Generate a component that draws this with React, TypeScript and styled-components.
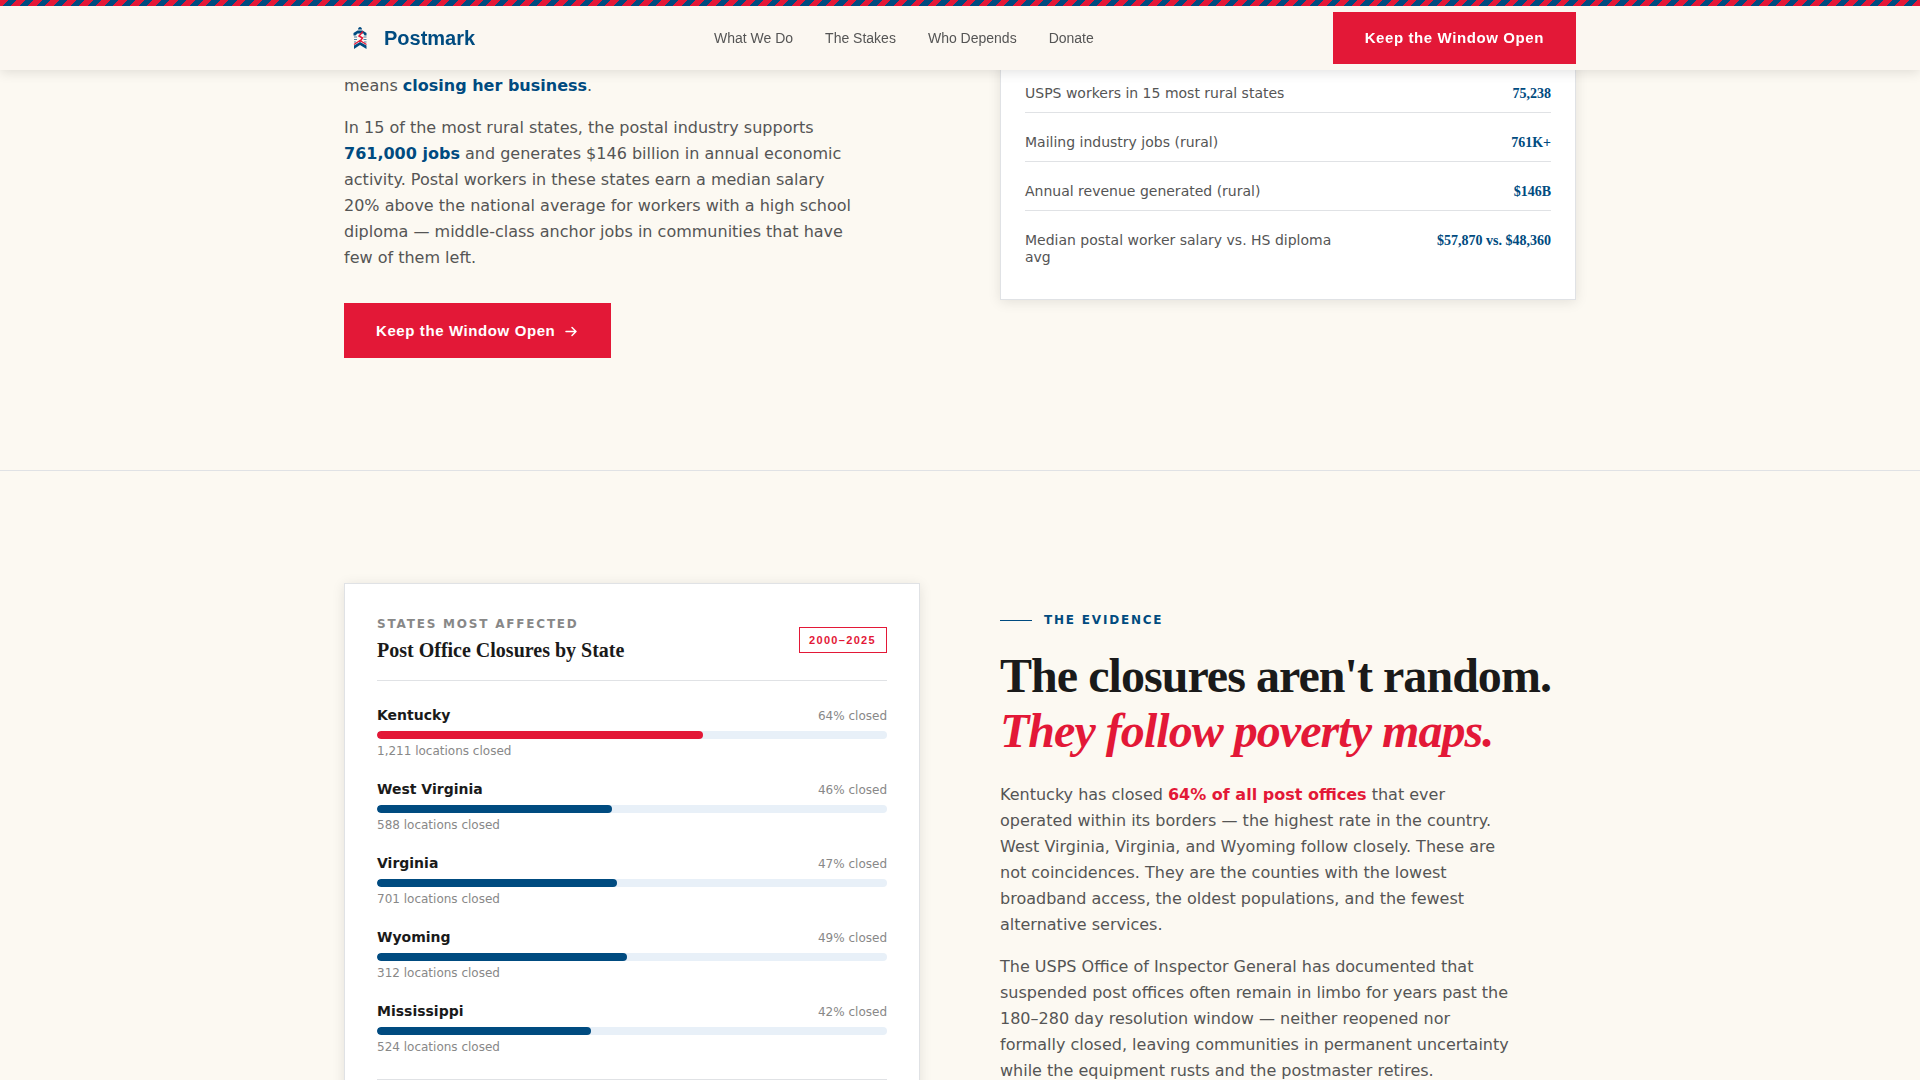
import React from "react";
import styled, { createGlobalStyle } from "styled-components";

const blue = "#004b80";
const red = "#e31837";
const ink = "#1a1a1a";
const body = "#555555";
const muted = "#888888";
const cream = "#fcf9f2";
const rule = "#e0e2e5";
const sans = `"DejaVu Sans", sans-serif`;
const ui = `"Liberation Sans", Arial, sans-serif`;
const serif = `"Liberation Serif", "Times New Roman", serif`;

const GlobalStyle = createGlobalStyle`
  *, *::before, *::after { box-sizing: border-box; }
  body { margin: 0; background: ${cream}; color: ${ink}; font-family: ${sans}; }
  h2, h3, p, dl, dd, ul { margin: 0; padding: 0; }
  a { text-decoration: none; }
`;

const Header = styled.header`
  position: fixed;
  top: 0;
  left: 0;
  right: 0;
  z-index: 10;
  background: #fbf7f1;
  box-shadow: 0 2px 12px rgba(0, 0, 0, 0.12);
`;

const AirmailStripe = styled.div`
  height: 6px;
  background: repeating-linear-gradient(
    -45deg,
    ${red} 0,
    ${red} 6px,
    ${blue} 6px,
    ${blue} 12px
  );
`;

const Container = styled.div`
  max-width: 1280px;
  margin: 0 auto;
  padding: 0 24px;
`;

const Bar = styled(Container)`
  display: flex;
  align-items: center;
  justify-content: space-between;
  height: 64px;
`;

const Brand = styled.a`
  display: flex;
  align-items: center;
  gap: 8px;
  color: ${blue};
  font: 700 20px/24px ${ui};
`;

const Nav = styled.nav`
  display: flex;
  gap: 32px;
`;

const NavLink = styled.a`
  color: ${body};
  font: 400 14px/20px ${ui};
`;

const Cta = styled.button<{ $large?: boolean }>`
  display: inline-flex;
  align-items: center;
  gap: 8px;
  height: ${(p) => (p.$large ? 55 : 52)}px;
  padding: 0 32px;
  border: 0;
  background: ${red};
  color: #ffffff;
  font: 700 15px/20px ${ui};
  letter-spacing: 0.04em;
  white-space: nowrap;
  cursor: pointer;
`;

const Jobs = styled.section`
  padding: 60px 0 112px;
  border-bottom: 1px solid ${rule};
`;

const Evidence = styled.section`
  padding: 112px 0;
`;

const Columns = styled(Container)`
  display: grid;
  grid-template-columns: 1fr 1fr;
  gap: 80px;
  align-items: start;
`;

const Story = styled.div`
  padding-top: 13px;
`;

const Argument = styled.div`
  padding-top: 25px;
`;

const Copy = styled.p`
  max-width: 520px;
  margin-bottom: 16px;
  color: ${body};
  font-size: 16px;
  line-height: 26px;
`;

const Strong = styled.strong<{ $tone: string }>`
  color: ${(p) => p.$tone};
`;

const Action = styled.div`
  display: flex;
  margin-top: 32px;
`;

const Card = styled.div`
  background: #ffffff;
  border: 1px solid ${rule};
  box-shadow: 0 2px 12px rgba(0, 0, 0, 0.1);
`;

const FactCard = styled(Card)`
  padding: 24px 24px 33px;
`;

const Facts = styled.dl`
  display: grid;
  gap: 21px;
`;

const Fact = styled.div`
  display: flex;
  justify-content: space-between;
  gap: 24px;
  padding-bottom: 10px;
  border-bottom: 1px solid ${rule};
  font-size: 14px;
  line-height: 17px;

  &:last-child {
    padding-bottom: 0;
    border-bottom: 0;
  }
`;

const FactLabel = styled.dt`
  max-width: 320px;
  color: ${body};
`;

const FactValue = styled.dd`
  color: ${blue};
  font-family: ${serif};
  font-weight: 700;
  white-space: nowrap;
`;

const StateCard = styled(Card)`
  padding: 32px;
`;

const CardHead = styled.div`
  display: flex;
  align-items: center;
  justify-content: space-between;
  padding-bottom: 16px;
  border-bottom: 1px solid ${rule};
`;

const Kicker = styled.p`
  color: ${muted};
  font-size: 12px;
  font-weight: 700;
  line-height: 16px;
  letter-spacing: 0.15em;
  text-transform: uppercase;
`;

const CardTitle = styled.h3`
  margin-top: 4px;
  font: 700 20px/28px ${serif};
`;

const Badge = styled.span`
  padding: 4px 10px 4px 9px;
  border: 1px solid ${red};
  color: ${red};
  font: 700 11px/16px ${ui};
  letter-spacing: 0.12em;
`;

const StateList = styled.ul`
  display: grid;
  gap: 20px;
  padding: 24px 0;
  border-bottom: 1px solid ${rule};
  list-style: none;
`;

const StateRow = styled.div`
  display: flex;
  align-items: baseline;
  justify-content: space-between;
  margin-bottom: 6px;
`;

const StateName = styled.span`
  font-size: 14px;
  font-weight: 700;
  line-height: 20px;
`;

const Small = styled.span`
  display: block;
  color: ${muted};
  font-size: 12px;
  line-height: 16px;
`;

const Track = styled.div`
  height: 8px;
  margin-bottom: 4px;
  border-radius: 4px;
  background: #e8f0f8;
  overflow: hidden;
`;

const Fill = styled.div<{ $tone: string }>`
  height: 100%;
  border-radius: 4px;
  background: ${(p) => p.$tone};
`;

const Eyebrow = styled.p`
  display: flex;
  align-items: center;
  gap: 12px;
  margin-bottom: 16px;
  color: ${blue};
  font-size: 12px;
  font-weight: 700;
  line-height: 24px;
  letter-spacing: 0.15em;
  text-transform: uppercase;

  &::before {
    content: "";
    width: 32px;
    height: 1px;
    background: ${blue};
  }
`;

const Headline = styled.h2`
  margin-bottom: 24px;
  font: 700 48px/55px ${serif};
  letter-spacing: -0.02em;

  em {
    display: block;
    color: ${red};
  }
`;

const facts = [
  ["USPS workers in 15 most rural states", "75,238"],
  ["Mailing industry jobs (rural)", "761K+"],
  ["Annual revenue generated (rural)", "$146B"],
  ["Median postal worker salary vs. HS diploma avg", "$57,870 vs. $48,360"],
];

const states = [
  { name: "Kentucky", share: 64, closed: "1,211", tone: red },
  { name: "West Virginia", share: 46, closed: "588", tone: blue },
  { name: "Virginia", share: 47, closed: "701", tone: blue },
  { name: "Wyoming", share: 49, closed: "312", tone: blue },
  { name: "Mississippi", share: 42, closed: "524", tone: blue },
];

function Logo() {
  return (
    <svg width="32" height="32" viewBox="0 0 32 32" aria-hidden="true">
      <path d="M14 7.500c0-1.500 1-2.500 2-2.500s2 1 2 2.500z" fill={blue} />
      <path d="M9.500 13.500V11l4-2.500h5l4 2.500v2.500h-2l-1-2h-6l-2 2z" fill={blue} />
      <path d="M10 15h3M10 17.500h3M10 20h2M19.500 15h3M19.500 17.500h3M20 20h2.500" stroke={blue} strokeWidth="1.200" opacity="0.700" />
      <path d="M19 9.500l-4 4.500 3.500 2-3 4" fill="none" stroke={red} strokeWidth="1.500" />
      <path d="M10 22.500l6-4 6.500 4" fill="none" stroke={red} strokeWidth="1.200" />
      <path d="M10 27v-3.500l6-3.500 6.500 3.500V27L16 23z" fill={blue} />
    </svg>
  );
}

function Arrow() {
  return (
    <svg width="16" height="16" viewBox="0 0 16 16" fill="none" stroke="currentColor" strokeWidth="1.500" strokeLinecap="round" strokeLinejoin="round" aria-hidden="true">
      <path d="M3 8.500h10M9 4.500l4 4-4 4" />
    </svg>
  );
}

export default function App() {
  return (
    <>
      <GlobalStyle />
      <Header>
        <AirmailStripe />
        <Bar>
          <Brand href="#top">
            <Logo />
            Postmark
          </Brand>
          <Nav aria-label="Main">
            <NavLink href="#what">What We Do</NavLink>
            <NavLink href="#stakes">The Stakes</NavLink>
            <NavLink href="#who">Who Depends</NavLink>
            <NavLink href="#donate">Donate</NavLink>
          </Nav>
          <Cta type="button">Keep the Window Open</Cta>
        </Bar>
      </Header>
      <main>
        <Jobs id="who">
          <Columns>
            <Story>
              <Copy>
                means <Strong $tone={blue}>closing her business</Strong>.
              </Copy>
              <Copy>
                In 15 of the most rural states, the postal industry supports{" "}
                <Strong $tone={blue}>761,000 jobs</Strong> and generates $146 billion in annual
                economic activity. Postal workers in these states earn a median salary 20% above
                the national average for workers with a high school diploma — middle-class anchor
                jobs in communities that have few of them left.
              </Copy>
              <Action>
                <Cta type="button" $large>
                  Keep the Window Open
                  <Arrow />
                </Cta>
              </Action>
            </Story>
            <FactCard>
              <Facts>
                {facts.map(([label, value]) => (
                  <Fact key={label}>
                    <FactLabel>{label}</FactLabel>
                    <FactValue>{value}</FactValue>
                  </Fact>
                ))}
              </Facts>
            </FactCard>
          </Columns>
        </Jobs>
        <Evidence id="stakes">
          <Columns>
            <StateCard>
              <CardHead>
                <div>
                  <Kicker>States most affected</Kicker>
                  <CardTitle>Post Office Closures by State</CardTitle>
                </div>
                <Badge>2000–2025</Badge>
              </CardHead>
              <StateList>
                {states.map((s) => (
                  <li key={s.name}>
                    <StateRow>
                      <StateName>{s.name}</StateName>
                      <Small>{s.share}% closed</Small>
                    </StateRow>
                    <Track>
                      <Fill $tone={s.tone} style={{ width: `${s.share}%` }} />
                    </Track>
                    <Small>{s.closed} locations closed</Small>
                  </li>
                ))}
              </StateList>
            </StateCard>
            <Argument>
              <Eyebrow>The evidence</Eyebrow>
              <Headline>
                The closures aren't random. <em>They follow poverty maps.</em>
              </Headline>
              <Copy>
                Kentucky has closed <Strong $tone={red}>64% of all post offices</Strong> that ever
                operated within its borders — the highest rate in the country. West Virginia,
                Virginia, and Wyoming follow closely. These are not coincidences. They are the
                counties with the lowest broadband access, the oldest populations, and the fewest
                alternative services.
              </Copy>
              <Copy>
                The USPS Office of Inspector General has documented that suspended post offices
                often remain in limbo for years past the 180–280 day resolution window — neither
                reopened nor formally closed, leaving communities in permanent uncertainty while
                the equipment rusts and the postmaster retires.
              </Copy>
            </Argument>
          </Columns>
        </Evidence>
      </main>
    </>
  );
}
